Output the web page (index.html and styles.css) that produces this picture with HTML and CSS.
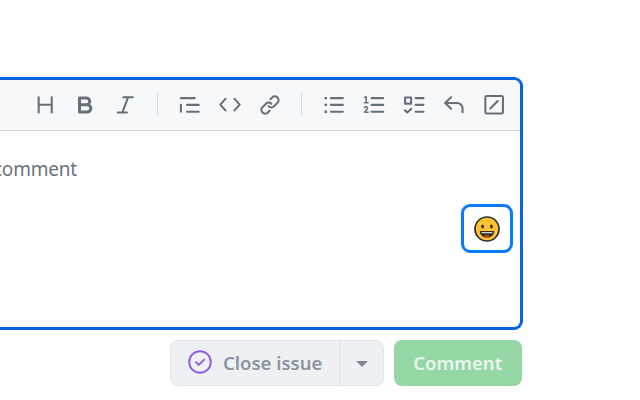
FILE: index.html
```html
<!DOCTYPE html>
<html lang="en">
<head>
<meta charset="utf-8">
<title>Comment</title>
<link rel="stylesheet" href="styles.css">
</head>
<body>
<main class="page">
  <section class="editor">
    <div class="toolbar">
      <span class="tool"><svg viewBox="0 0 16 16"><path d="M3.4 2.4v11.1M12.9 2.4v11.1M3.4 7.8h9.5"/></svg></span>
      <span class="tool"><svg viewBox="0 0 16 16"><path class="bold" d="M4 2.9h5a2.45 2.45 0 0 1 0 4.9H4zM4 7.8h5.6a2.65 2.65 0 0 1 0 5.3H4z"/></svg></span>
      <span class="tool"><svg viewBox="0 0 16 16"><path d="M6.75 2.4h6.9M2.75 13.4h6.7M10.2 2.4L6.1 13.4"/></svg></span>
      <span class="divider"></span>
      <span class="tool"><svg viewBox="0 0 16 16"><path d="M1.4 3h10M5.8 7.9h8.6M5.8 12.9h8.6M1.4 7.9v5"/></svg></span>
      <span class="tool"><svg viewBox="0 0 16 16"><path d="M4.7 3.5L.95 7.7l3.75 4.2M11.3 3.5L15.05 7.7l-3.75 4.2"/></svg></span>
      <span class="tool"><svg viewBox="0 0 16 16"><path class="solid" d="m7.775 3.275 1.25-1.25a3.5 3.5 0 1 1 4.95 4.95l-2.5 2.5a3.5 3.5 0 0 1-4.95 0 .751.751 0 0 1 .018-1.042.751.751 0 0 1 1.042-.018 1.998 1.998 0 0 0 2.83 0l2.5-2.5a2.002 2.002 0 0 0-2.83-2.83l-1.25 1.25a.751.751 0 0 1-1.042-.018.751.751 0 0 1-.018-1.042Zm-4.69 9.64a1.998 1.998 0 0 0 2.83 0l1.25-1.25a.751.751 0 0 1 1.042.018.751.751 0 0 1 .018 1.042l-1.25 1.25a3.5 3.5 0 1 1-4.95-4.95l2.5-2.5a3.5 3.5 0 0 1 4.95 0 .751.751 0 0 1-.018 1.042.751.751 0 0 1-1.042.018 1.998 1.998 0 0 0-2.83 0l-2.5 2.5a1.998 1.998 0 0 0 0 2.83Z"/></svg></span>
      <span class="divider divider-narrow"></span>
      <span class="tool"><svg viewBox="0 0 16 16"><path d="M5.75 3h8.7M5.75 7.9h8.7M5.75 12.9h8.7"/><path class="solid" d="M1.1 2.1h1.8v1.8H1.1zM1.1 7h1.8v1.8H1.1zM1.1 12h1.8v1.8H1.1z"/></svg></span>
      <span class="tool"><svg viewBox="0 0 16 16"><path d="M6.2 3h8.5M6.2 7.9h8.5M6.2 12.9h8.5"/><path class="fine" d="M1.1 2.6l1.2-.7v4.5M1 6.4h2.7M1 9.9c.6-1 2.3-.8 2.3.4 0 1-1.5 1.6-2.2 2.9h2.6"/></svg></span>
      <span class="tool"><svg viewBox="0 0 16 16"><path d="M9.2 3h5.7M9.2 7.9h5.7M9.2 12.9h5.7M1.5 2.6h4.4V7H1.5zM1.4 11.9l1.6 1.5L6 10.8"/></svg></span>
      <span class="tool"><svg viewBox="0 0 16 16"><path d="M5.9 2.3L1.5 6.5l4.4 4.3M1.5 6.5h8.8a3.9 3.9 0 0 1 3.9 3.9v2.9"/></svg></span>
      <span class="tool"><svg viewBox="0 0 16 16"><rect x="1.7" y="1.4" width="12.8" height="12.8" rx=".9"/><path d="M5.3 10.6l5.4-5.5"/></svg></span>
    </div>
    <div class="field">
      <span class="placeholder">comment</span>
      <span class="emoji">
        <svg viewBox="0 0 26 26"><circle cx="13" cy="13" r="12" fill="#fdc334" stroke="#30302f" stroke-width="1.7"/><ellipse cx="8.6" cy="10.6" rx="1.4" ry="2" fill="#30302f"/><ellipse cx="17.4" cy="10.6" rx="1.4" ry="2" fill="#30302f"/><path d="M5.8 15h14.4c0 4-3 6.6-7.2 6.6S5.8 19 5.8 15z" fill="#30302f"/><path d="M7.4 15.9h11.2l-.5 1.4H7.9z" fill="#d5d5d5"/><path d="M10 20.3q3-2.4 6 0q-3 1.2-6 0z" fill="#f03a17"/></svg>
      </span>
    </div>
  </section>
  <div class="actions">
    <div class="split">
      <span class="close"><svg viewBox="0 0 24 24"><circle cx="12" cy="12" r="10.8"/><path d="M8 12.2l2.8 2.7 5.3-5.3"/></svg><span class="close-label">Close issue</span></span>
      <span class="more"><i class="caret"></i></span>
    </div>
    <span class="submit">Comment</span>
  </div>
</main>
</body>
</html>
```
FILE: styles.css
```css
* { box-sizing: border-box; }
body {
  margin: 0;
  background: #fff;
  font-family: "Noto Sans", "Open Sans", sans-serif;
  overflow: hidden;
}
.page { width: 523px; height: 400px; padding-top: 77px; }
.editor {
  height: 253px;
  border: 3px solid #0864de;
  border-left: 0;
  border-radius: 0 9px 9px 0;
  overflow: hidden;
}
.toolbar {
  display: flex;
  align-items: center;
  height: 51px;
  padding: 0 0 1px 24.5px;
  background: #f6f8fa;
  border-bottom: 1px solid #d0d7de;
}
.tool { display: flex; flex: none; width: 40px; justify-content: center; }
.tool svg {
  width: 22px;
  height: 22px;
  fill: none;
  stroke: #66707b;
  stroke-width: 1.5;
  stroke-linecap: round;
  stroke-linejoin: round;
}
.tool .solid { fill: #66707b; stroke: none; }
.tool .bold { stroke-width: 2.2; }
.tool .fine { stroke-width: 1.1; }
.divider { display: flex; flex: none; width: 25px; height: 23px; justify-content: center; }
.divider-narrow { width: 24px; }
.divider::before { content: ""; width: 1px; background: #d3d9e0; }
.field {
  display: flex;
  justify-content: space-between;
  height: 196px;
  padding-right: 7px;
}
.placeholder {
  display: flex;
  justify-content: flex-end;
  width: 77px;
  margin-top: 24px;
  height: 28px;
  line-height: 28px;
  font-size: 19px;
  letter-spacing: -0.2px;
  color: #6a737d;
}
.emoji {
  display: flex;
  align-items: center;
  justify-content: center;
  width: 52px;
  height: 49px;
  margin-top: 73px;
  border: 3px solid #0a7bff;
  border-radius: 9px;
}
.emoji svg { width: 26px; height: 26px; }
.actions {
  display: flex;
  justify-content: flex-end;
  gap: 10px;
  padding: 10px 1.5px 0 0;
}
.split {
  display: flex;
  width: 214px;
  height: 45.5px;
  border: 1px solid #e2e6ea;
  border-radius: 8px;
  background: #eef1f4;
}
.close {
  display: flex;
  align-items: center;
  width: 168px;
  padding: 0 0 1px 17px;
  gap: 11px;
  color: #8b949f;
  font-size: 18.5px;
  font-weight: 600;
  white-space: nowrap;
}
.close svg {
  flex: none;
  width: 24px;
  height: 24px;
  fill: none;
  stroke: #925fe0;
  stroke-width: 2;
  stroke-linecap: round;
  stroke-linejoin: round;
}
.more {
  display: flex;
  flex: 1;
  align-items: center;
  justify-content: center;
  border-left: 1px solid #dfe3e8;
}
.caret {
  margin-top: 2px;
  border: 6px solid transparent;
  border-top-color: #808a97;
  border-bottom: 0;
}
.submit {
  display: flex;
  align-items: center;
  justify-content: center;
  width: 127.5px;
  height: 45.5px;
  padding-bottom: 1px;
  border-radius: 8px;
  background: #95d8a6;
  color: #eaf7ed;
  font-size: 18.5px;
  font-weight: 600;
}
```
